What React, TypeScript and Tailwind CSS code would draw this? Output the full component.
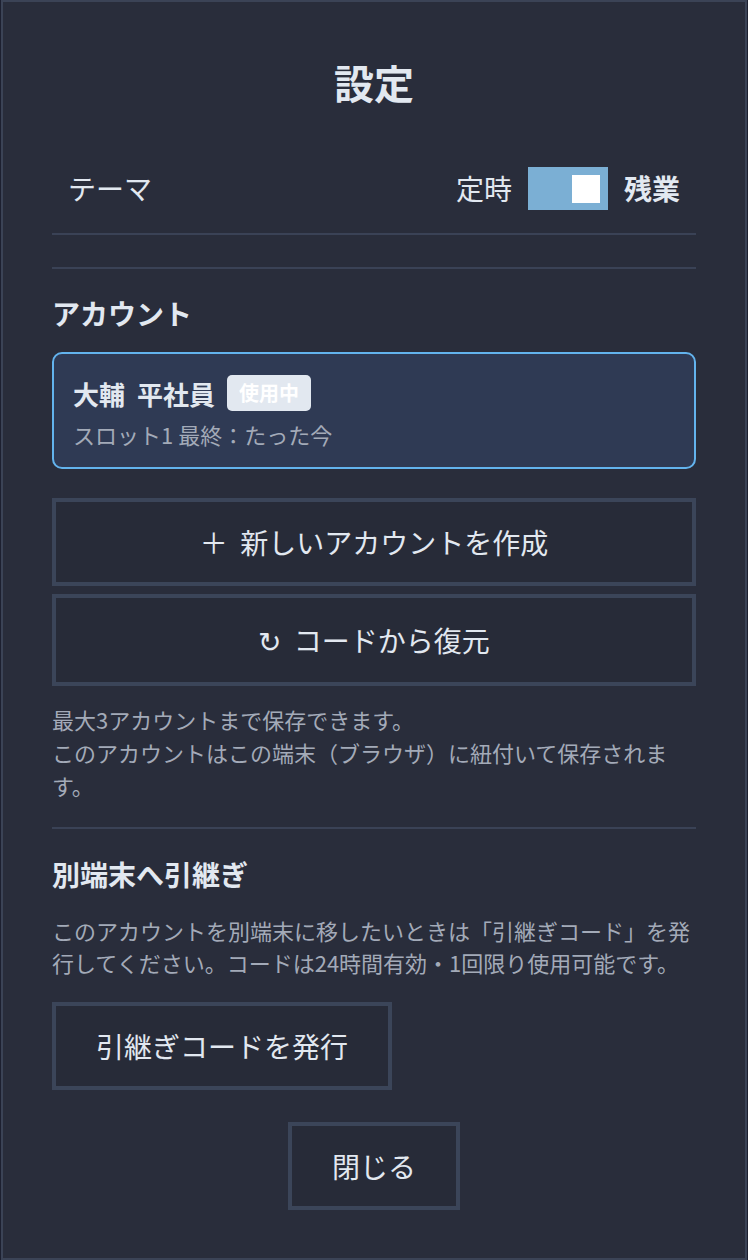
import React, { useState } from 'react';

const font = { fontFamily: '"Noto Sans CJK JP", "Noto Sans", sans-serif' };

const OutlineButton = ({ label, className }: { label: React.ReactNode; className: string }) => (
    <button
        className={`flex items-center justify-center border-4 border-[#3b4559] bg-[#272b38] text-[28px] text-[#e2e8f0] ${className}`}
    >
        {label}
    </button>
);

const App = () => {
    const [overtime, setOvertime] = useState(true);

    return (
        <div className="w-[748px] h-[1260px] bg-[#1d2030] px-[1px]" style={font}>
            <div className="h-full border-2 border-[#3b4356] bg-[#292d3b] px-[49px] pt-[50px]">
                <h1 className="text-center text-[40px] leading-[60px] font-bold text-[#e2e8f0]">設定</h1>

                <div className="mt-[31px] flex h-[92px] items-center justify-between border-b-2 border-[#3a4256] px-4">
                    <span className="text-[28px] text-[#e2e8f0]">テーマ</span>
                    <div className="flex items-center gap-4">
                        <span className="text-[28px] text-[#e2e8f0]">定時</span>
                        <button
                            onClick={() => setOvertime(!overtime)}
                            className={`flex h-[43px] w-[80px] items-start bg-[#7bafd4] pt-[8px] px-[8px] ${overtime ? 'justify-end' : 'justify-start'}`}
                        >
                            <span className="block h-[28px] w-[28px] bg-white" />
                        </button>
                        <span className="text-[28px] font-bold text-[#e2e8f0]">残業</span>
                    </div>
                </div>

                <div className="mt-[32px] h-[2px] bg-[#3a4256]" />

                <h2 className="mt-[23px] text-[28px] leading-[42px] font-bold text-[#e2e8f0]">アカウント</h2>

                <div className="mt-[18px] rounded-[10px] border-2 border-[#63b3ed] bg-[#2f3a54] px-[19px] pt-[21px] pb-[16px]">
                    <div className="flex h-[36px] items-center">
                        <span className="flex gap-3 text-[26px] font-bold text-[#e2e8f0]">
                            <span>大輔</span>
                            <span>平社員</span>
                        </span>
                        <span className="ml-3 flex h-[36px] items-center rounded-[5px] bg-[#e2e8f0] px-3 text-[20px] font-bold text-white">
                            使用中
                        </span>
                    </div>
                    <div className="mt-[7px] text-[22px] leading-[33px] text-[#a3aab8]">スロット1 最終：たった今</div>
                </div>

                <OutlineButton className="mt-[29px] h-[88px] w-full" label={<span>＋&nbsp;&nbsp;新しいアカウントを作成</span>} />
                <OutlineButton className="mt-[8px] h-[92px] w-full" label={<span>↻&nbsp;&nbsp;コードから復元</span>} />

                <p className="mt-[17px] text-[22px] leading-[33px] text-[#a3aab8]">
                    最大3アカウントまで保存できます。
                    <br />
                    このアカウントはこの端末（ブラウザ）に紐付いて保存されます。
                </p>

                <div className="mt-[25px] h-[2px] bg-[#3a4256]" />

                <h2 className="mt-[24px] text-[28px] leading-[42px] font-bold text-[#e2e8f0]">別端末へ引継ぎ</h2>

                <p className="mt-[19px] text-[22px] leading-[32px] text-[#a3aab8]">
                    このアカウントを別端末に移したいときは「引継ぎコード」を発行してください。コードは24時間有効・1回限り使用可能です。
                </p>

                <OutlineButton className="mt-[24px] h-[88px] px-10" label="引継ぎコードを発行" />

                <div className="mt-[32px] flex justify-center">
                    <OutlineButton className="h-[88px] px-10" label="閉じる" />
                </div>
            </div>
        </div>
    );
};

export default App;
